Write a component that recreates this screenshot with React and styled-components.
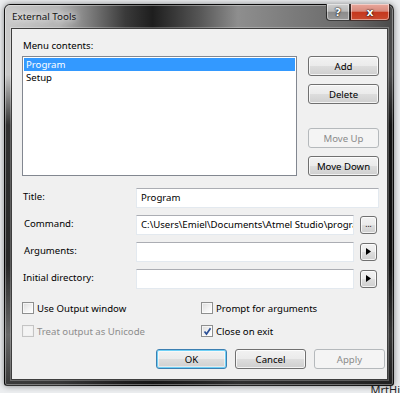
import React from "react";
import styled, { createGlobalStyle } from "styled-components";

const GlobalStyle = createGlobalStyle`
	html, body {
		margin: 0;
		padding: 0;
		background: #eceef0;
		overflow: hidden;
	}
	body {
		font-family: "Noto Sans", "Open Sans", sans-serif;
		font-size: 9.6px;
		color: #000;
	}
`;

const Page = styled.div`
	width: 400px;
	height: 393px;
	display: flex;
	flex-direction: column;
	overflow: hidden;
`;

const Window = styled.div`
	margin: 4px 0 0 4px;
	width: 390px;
	height: 382px;
	box-sizing: border-box;
	padding: 0 5px 5px 6px;
	display: flex;
	flex-direction: column;
	border: 1px solid rgba(0, 0, 0, 0.75);
	border-radius: 6px 6px 3px 3px;
	box-shadow: 0 0 6px rgba(0, 0, 0, 0.45), inset 0 0 0 1px rgba(255, 255, 255, 0.35);
	background:
		linear-gradient(to bottom, transparent 0, transparent 70px, rgba(0, 0, 0, 0.75) 120px, rgba(0, 0, 0, 0.8) 260px, rgba(40, 40, 40, 0.6) 330px, rgba(20, 20, 20, 0.8) 100%),
		linear-gradient(to right, #c9c9c9 0%, #b4b4b4 14%, #3a3a3a 31%, #1e1e1e 38%, #555 50%, #8e8e8e 60%, #7a7a7a 75%, #6a6a6a 88%, #4a4a4a 100%);
`;

const TitleBar = styled.div`
	height: 24px;
	display: flex;
	align-items: flex-start;
	justify-content: space-between;
`;

const Caption = styled.div`
	font-size: 9.8px;
	color: #151515;
	padding: 5px 0 0 1px;
	text-shadow: 0 0 6px rgba(255, 255, 255, 0.95), 0 0 10px rgba(255, 255, 255, 0.8);
`;

const CaptionButtons = styled.div`
	display: flex;
	margin-right: -2px;
	margin-top: -1px;
`;

const CaptionButton = styled.div`
	width: ${(p) => p.$w}px;
	height: 17px;
	box-sizing: border-box;
	display: flex;
	align-items: center;
	justify-content: center;
	border: 1px solid rgba(0, 0, 0, 0.7);
	border-top: none;
	border-radius: ${(p) => (p.$close ? "0 0 4px 0" : "0 0 0 4px")};
	box-shadow: inset 0 0 0 1px rgba(255, 255, 255, 0.45);
	color: #fff;
	font-weight: 700;
	font-size: 11px;
	font-family: "DejaVu Sans", sans-serif;
	text-shadow: 0 0 2px #000, 0 0 1px #000;
	background: ${(p) =>
		p.$close
			? "linear-gradient(to bottom, #e9a79c 0%, #d88a7c 45%, #c5371d 52%, #c94a2f 100%)"
			: "linear-gradient(to bottom, #cfcfcf 0%, #b8b8b8 45%, #8c8c8c 52%, #9a9a9a 100%)"};
`;

const Client = styled.div`
	flex: 1;
	background: #f0f0f0;
	border: 1px solid #3e3e3e;
	box-shadow: 0 0 0 1px rgba(255, 255, 255, 0.25);
	padding: 10px 0 10px 10px;
	display: flex;
	flex-direction: column;
`;

const Label = styled.div`
	padding-left: 1px;
	line-height: 14px;
	height: 14px;
	white-space: nowrap;
`;

const MenuSection = styled.div`
	margin-top: 3px;
	display: grid;
	grid-template-columns: 275px 71px;
	column-gap: 11px;
	height: 120px;
`;

const ListBox = styled.div`
	background: #fff;
	border: 1px solid #828790;
	padding: 1px 1px 0 1px;
	display: flex;
	flex-direction: column;
`;

const ListItem = styled.div`
	height: 13px;
	line-height: 13px;
	padding-left: 2px;
	background: ${(p) => (p.$selected ? "#3399ff" : "transparent")};
	color: ${(p) => (p.$selected ? "#fff" : "#000")};
`;

const ButtonColumn = styled.div`
	display: flex;
	flex-direction: column;
	gap: 8px;
`;

const Spacer = styled.div`
	flex: 1;
`;

const Button = styled.button`
	width: 71px;
	height: 20px;
	box-sizing: border-box;
	padding: 0;
	font: inherit;
	border-radius: 3px;
	cursor: default;
	border: 1px solid ${(p) => (p.disabled ? "#b5b9bc" : p.$default ? "#3c7fb1" : "#707070")};
	color: ${(p) => (p.disabled ? "#8b8b8b" : "#000")};
	background: ${(p) =>
		p.disabled
			? "#f4f4f4"
			: "linear-gradient(to bottom, #f2f2f2 0%, #ebebeb 48%, #dddddd 52%, #cfcfcf 100%)"};
	box-shadow: ${(p) =>
		p.disabled
			? "none"
			: p.$default
			? "inset 0 0 0 1px #6fd0f6, inset 0 0 0 2px rgba(255,255,255,0.5)"
			: "inset 0 0 0 1px rgba(255,255,255,0.75)"};
`;

const Fields = styled.div`
	margin-top: 12px;
	display: grid;
	grid-template-columns: 114px 218px 25px;
	grid-auto-rows: 20px;
	row-gap: 7px;
	align-items: center;
`;

const FieldLabel = styled.div`
	padding-left: ${(p) => p.$pad || 1}px;
	margin-top: -3px;
	white-space: nowrap;
`;

const TextBox = styled.div`
	grid-column: ${(p) => (p.$wide ? "2 / 4" : "2 / 3")};
	height: 20px;
	box-sizing: border-box;
	background: #fff;
	border: 1px solid #e3e9ef;
	border-top-color: #abadb3;
	line-height: 18px;
	padding: 0 4px;
	white-space: nowrap;
	overflow: hidden;
	text-overflow: clip;
`;

const SmallButton = styled.div`
	margin-left: 6px;
	width: 17px;
	height: 18px;
	box-sizing: border-box;
	border: 1px solid #707070;
	border-radius: 3px;
	background: linear-gradient(to bottom, #f2f2f2 0%, #ebebeb 48%, #dddddd 52%, #cfcfcf 100%);
	box-shadow: inset 0 0 0 1px rgba(255, 255, 255, 0.75);
	display: flex;
	align-items: center;
	justify-content: center;
	font-size: 8px;
	line-height: 1;
	padding-bottom: 2px;
	color: #000;
`;

const Checks = styled.div`
	margin-top: 13px;
	display: grid;
	grid-template-columns: 179px 1fr;
	grid-auto-rows: 12px;
	row-gap: 11px;
`;

const CheckItem = styled.div`
	display: flex;
	align-items: center;
	gap: 3px;
	color: ${(p) => (p.$disabled ? "#8d8d8d" : "#000")};
	white-space: nowrap;
`;

const Box = styled.div`
	width: 12px;
	height: 12px;
	box-sizing: border-box;
	border: 1px solid ${(p) => (p.$disabled ? "#c4c4c4" : "#8e8f8f")};
	background: ${(p) =>
		p.$disabled ? "#f4f4f4" : "linear-gradient(135deg, #dcdcdc 0%, #f4f4f4 60%, #ffffff 100%)"};
	box-shadow: inset 0 0 0 1px ${(p) => (p.$disabled ? "#f0f0f0" : "rgba(255,255,255,0.6)")};
	display: flex;
	align-items: center;
	justify-content: center;
`;

const Footer = styled.div`
	margin-top: 12px;
	display: flex;
	gap: 8px;
	padding-left: 134px;
`;

const Backdrop = styled.div`
	flex: 1;
	display: flex;
	justify-content: flex-end;
	align-items: flex-end;
	font-size: 11px;
	color: #222;
	line-height: 6px;
	overflow: hidden;
`;

function Arrow() {
	return (
		<svg width="5" height="7" viewBox="0 0 5 7">
			<path d="M0 0 L5 3.5 L0 7 Z" fill="#000" />
		</svg>
	);
}

function Check({ label, checked, disabled }) {
	return (
		<CheckItem $disabled={disabled}>
			<Box $disabled={disabled}>
				{checked && (
					<svg width="9" height="9" viewBox="0 0 9 9">
						<path d="M1.5 4.5 L3.5 7 L7.5 1.2" fill="none" stroke="#2b4f96" strokeWidth="1.7" />
					</svg>
				)}
			</Box>
			{label}
		</CheckItem>
	);
}

export default function App() {
	return (
		<Page>
			<GlobalStyle />
			<Window>
				<TitleBar>
					<Caption>External Tools</Caption>
					<CaptionButtons>
						<CaptionButton $w={24}>?</CaptionButton>
						<CaptionButton $w={40} $close>
							x
						</CaptionButton>
					</CaptionButtons>
				</TitleBar>
				<Client>
					<Label>Menu contents:</Label>
					<MenuSection>
						<ListBox>
							<ListItem $selected>Program</ListItem>
							<ListItem>Setup</ListItem>
						</ListBox>
						<ButtonColumn>
							<Button>Add</Button>
							<Button>Delete</Button>
							<Spacer />
							<Button disabled>Move Up</Button>
							<Button>Move Down</Button>
						</ButtonColumn>
					</MenuSection>
					<Fields>
						<FieldLabel>Title:</FieldLabel>
						<TextBox $wide>Program</TextBox>
						<FieldLabel $pad={2}>Command:</FieldLabel>
						<TextBox>C:\Users\Emiel\Documents\Atmel Studio\progra</TextBox>
						<SmallButton>...</SmallButton>
						<FieldLabel $pad={2}>Arguments:</FieldLabel>
						<TextBox />
						<SmallButton>
							<Arrow />
						</SmallButton>
						<FieldLabel>Initial directory:</FieldLabel>
						<TextBox />
						<SmallButton>
							<Arrow />
						</SmallButton>
					</Fields>
					<Checks>
						<Check label="Use Output window" />
						<Check label="Prompt for arguments" />
						<Check label="Treat output as Unicode" disabled />
						<Check label="Close on exit" checked />
					</Checks>
					<Footer>
						<Button $default>OK</Button>
						<Button>Cancel</Button>
						<Button disabled>Apply</Button>
					</Footer>
				</Client>
			</Window>
			<Backdrop>MrtHi</Backdrop>
		</Page>
	);
}
